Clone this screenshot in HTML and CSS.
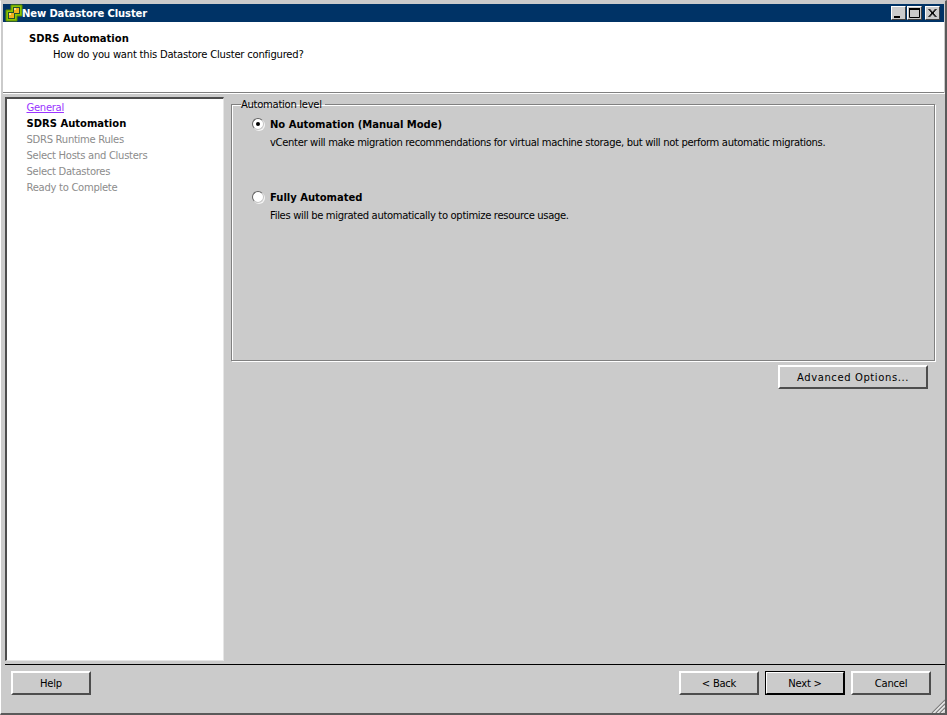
FILE: index.html
```html
<!DOCTYPE html>
<html lang="en">
<head>
<meta charset="utf-8">
<title>New Datastore Cluster</title>
<link rel="stylesheet" href="styles.css">
</head>
<body>
<div class="window">
  <div class="titlebar">
    <svg class="app-icon" width="18" height="18" viewBox="0 0 18 18">
      <path d="M1 6 L6 6 L6 1 L17 1 L17 12 L12 12 L12 17 L1 17 Z" fill="#8cc400" stroke="#5c8a00"/>
      <path d="M3 8 L8 8 L8 3 L15 3 L15 10 L10 10 L10 15 L3 15 Z" fill="#24502c"/>
      <rect x="9" y="4" width="5" height="5" fill="#f2b01e"/>
      <rect x="4" y="9" width="5" height="5" fill="#f2b01e"/>
      <rect x="9" y="4" width="2" height="2" fill="#ffe28a"/>
      <rect x="4" y="9" width="2" height="2" fill="#ffe28a"/>
    </svg>
    <span class="title-text">New Datastore Cluster</span>
    <div class="caption-buttons">
      <div class="cap-btn cap-min"><svg width="15" height="14" viewBox="0 0 15 14"><rect x="3" y="10" width="6" height="2" fill="#000"/></svg></div>
      <div class="cap-btn cap-max"><svg width="15" height="14" viewBox="0 0 15 14"><path d="M2.5 2.5 H12.5 V11.5 H2.5 Z" fill="none" stroke="#000"/><rect x="2" y="2" width="11" height="2" fill="#000"/></svg></div>
      <div class="cap-btn"><svg width="15" height="14" viewBox="0 0 15 14"><path d="M3.5 3 L10.5 11 M4.5 3 L11.5 11 M10.5 3 L3.5 11 M11.5 3 L4.5 11" stroke="#000" fill="none"/></svg></div>
    </div>
  </div>
  <header class="wizard-header">
    <div class="header-title">SDRS Automation</div>
    <div class="header-sub">How do you want this Datastore Cluster configured?</div>
  </header>
  <div class="main">
    <nav class="steps">
      <a class="step step-link" href="#">General</a>
      <div class="step step-current">SDRS Automation</div>
      <div class="step">SDRS Runtime Rules</div>
      <div class="step">Select Hosts and Clusters</div>
      <div class="step">Select Datastores</div>
      <div class="step">Ready to Complete</div>
    </nav>
    <section class="content">
      <fieldset class="group">
        <legend class="group-legend">Automation level</legend>
        <label class="option">
          <span class="radio radio-on"></span>
          <span class="option-label">No Automation (Manual Mode)</span>
        </label>
        <div class="option-desc">vCenter will make migration recommendations for virtual machine storage, but will not perform automatic migrations.</div>
        <label class="option option-second">
          <span class="radio"></span>
          <span class="option-label">Fully Automated</span>
        </label>
        <div class="option-desc">Files will be migrated automatically to optimize resource usage.</div>
      </fieldset>
      <div class="advanced-row">
        <button class="btn btn-advanced" type="button">Advanced Options...</button>
      </div>
    </section>
  </div>
  <footer class="footer">
    <button class="btn" type="button">Help</button>
    <div class="footer-right">
      <button class="btn" type="button">&lt; Back</button>
      <button class="btn btn-default" type="button">Next &gt;</button>
      <button class="btn" type="button">Cancel</button>
    </div>
    <svg class="grip" width="14" height="14" viewBox="0 0 14 14">
      <path d="M1 14 L14 1 M5 14 L14 5 M9 14 L14 9" stroke="#808080" stroke-width="1.2" fill="none"/>
      <path d="M2.5 14 L14 2.5 M6.5 14 L14 6.5 M10.5 14 L14 10.5" stroke="#ffffff" stroke-width="1" fill="none"/>
    </svg>
  </footer>
</div>
</body>
</html>
```
FILE: styles.css
```css
* { box-sizing: border-box; }
html, body { margin: 0; padding: 0; height: 100%; background: #cbcbcb; }
body { font-family: "DejaVu Sans", Verdana, sans-serif; font-size: 10px; color: #000; overflow: hidden; }

.window {
  position: relative;
  width: 947px;
  height: 715px;
  background: #cbcbcb;
  border-top: 1px solid #cbcbcb;
  border-left: 1px solid #ffffff;
  border-right: 2px solid #5a5a5a;
  border-bottom: 2px solid #5a5a5a;
  padding: 3px 0 0 2px;
  display: flex;
  flex-direction: column;
}

.titlebar {
  height: 18px;
  margin-right: 1px;
  background: #003366;
  color: #fff;
  display: flex;
  align-items: center;
  flex: none;
}
.app-icon { margin-left: 2px; flex: none; }
.title-text { font-weight: 700; font-size: 10px; letter-spacing: -0.12px; margin-left: -1px; padding-top: 1px; }
.caption-buttons { margin-left: auto; margin-right: 4px; display: flex; }
.cap-btn {
  width: 15px;
  height: 14px;
  background: #cbcbcb;
  border-top: 1px solid #fff;
  border-left: 1px solid #fff;
  border-right: 1px solid #404040;
  border-bottom: 1px solid #404040;
  display: flex;
  overflow: hidden;
}
.cap-btn svg { flex: none; margin: -1px 0 0 -1px; }
.cap-min { margin-right: 1px; }
.cap-max { margin-right: 3px; }

.wizard-header {
  height: 71px;
  margin-right: 1px;
  background: #fff;
  border-bottom: 1px solid #808080;
  padding: 9px 0 0 26px;
  flex: none;
}
.header-title { font-weight: 700; line-height: 16px; }
.header-sub { margin-left: 24px; line-height: 16px; letter-spacing: -0.21px; }

.main {
  display: flex;
  height: 568px;
  flex: none;
  padding: 3px 10px 0 2px;
  border-top: 1px solid #ffffff;
}
.steps {
  width: 219px;
  height: 564px;
  background: #fff;
  border-top: 2px solid #4d4d4d;
  border-left: 2px solid #4d4d4d;
  border-right: 1px solid #e6e6e6;
  border-bottom: 1px solid #e6e6e6;
  padding: 1px 0 0 19.5px;
  flex: none;
}
.step { display: block; line-height: 16px; color: #8c8c8c; white-space: nowrap; letter-spacing: -0.28px; }
.step-link { color: #9933ff; text-decoration: underline; }
.step-current { color: #000; font-weight: 700; letter-spacing: 0; }

.content { flex: 1; min-width: 0; padding-left: 7px; display: flex; flex-direction: column; }
.group {
  margin: 0;
  height: 264px;
  padding: 0 0 0 20px;
  border: 1px solid #808080;
  box-shadow: 1px 1px 0 #fff, inset 1px 1px 0 #fff;
}
.group-legend { margin-left: -11px; padding: 0 3px 0 0; line-height: 15px; color: #000; letter-spacing: -0.28px; }
.option { display: flex; align-items: center; height: 16px; margin-top: 4px; }
.option-second { margin-top: 38px; }
.radio {
  width: 12px; height: 12px; border-radius: 50%; background: #fff; flex: none;
  border: 1px solid #606060;
  border-right-color: #c4c4c4;
  border-bottom-color: #c4c4c4;
  box-shadow: 1px 1px 0 #f4f4f4;
  position: relative;
}
.radio-on::after {
  content: ""; position: absolute; left: 3px; top: 3px; width: 4px; height: 4px; border-radius: 50%; background: #000;
}
.option-label { margin-left: 6px; font-weight: 700; white-space: nowrap; letter-spacing: -0.02px; }
.option-desc { margin-left: 18px; line-height: 16px; margin-top: 3px; white-space: nowrap; letter-spacing: -0.33px; }

.advanced-row { display: flex; justify-content: flex-end; padding-right: 7px; margin-top: 4px; }

.btn {
  width: 80px;
  height: 24px;
  padding: 0;
  background: #cbcbcb;
  font: inherit;
  letter-spacing: -0.25px;
  color: #000;
  border-top: 2px solid #fff;
  border-left: 2px solid #fff;
  border-right: 2px solid #4d4d4d;
  border-bottom: 2px solid #4d4d4d;
  border-radius: 0;
}
.btn-advanced { width: 150px; letter-spacing: 0.6px; }
.btn-default { outline: 1px solid #000; outline-offset: -1px; border-right-color: #000; border-bottom-color: #000; }

.footer {
  position: relative;
  flex: 1;
  margin: 3px 0 0 2px;
  border-top: 1px solid #000;
  padding: 6px 14px 0 6px;
  display: flex;
  justify-content: space-between;
  align-items: flex-start;
}
.footer-right { display: flex; gap: 6px; }
.grip { position: absolute; right: 0; bottom: 0; }
```
